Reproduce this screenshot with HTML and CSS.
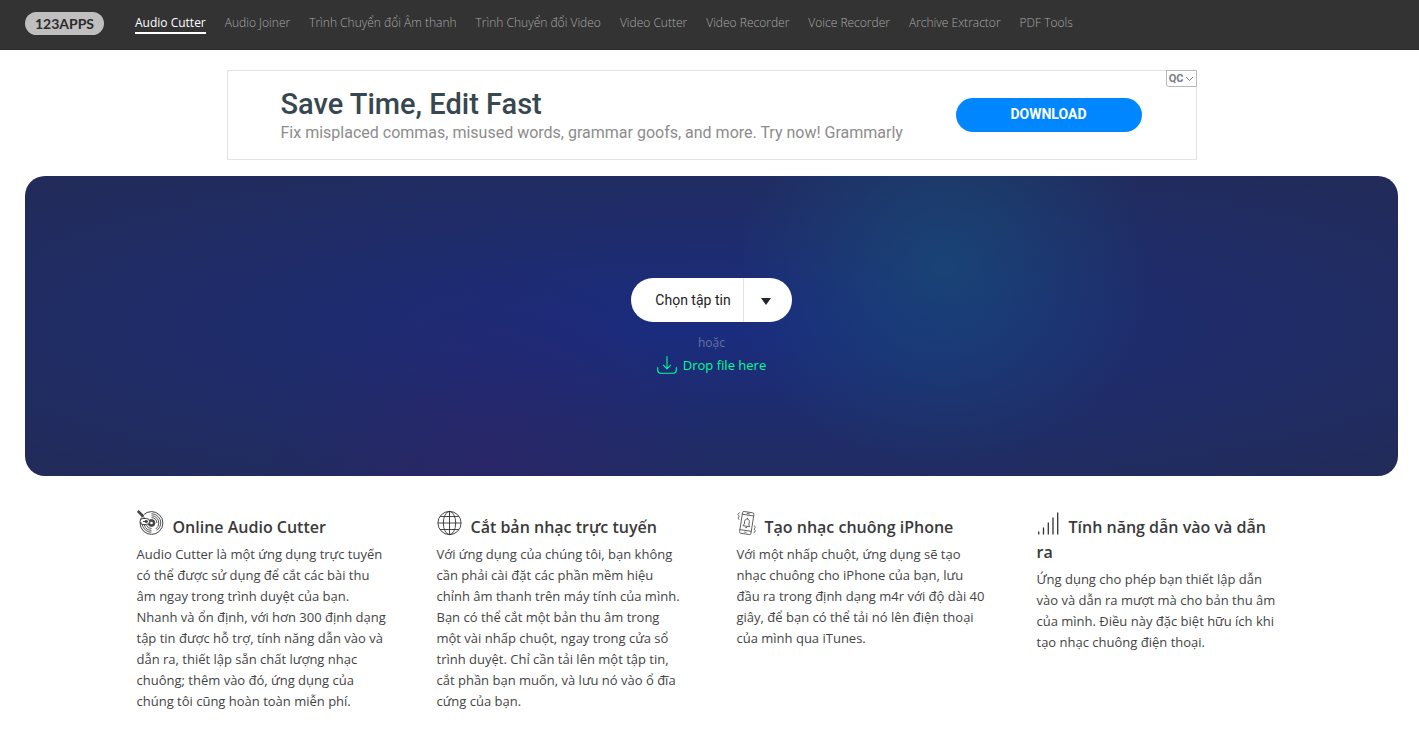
FILE: index.html
```html
<!DOCTYPE html>
<html lang="vi">
<head>
<meta charset="utf-8">
<meta name="viewport" content="width=device-width, initial-scale=1">
<title>Audio Cutter</title>
<link rel="stylesheet" href="styles.css">
</head>
<body>
<header class="topbar">
  <a class="logo" href="#">123APPS</a>
  <nav class="nav">
    <a class="nav-link active" href="#">Audio Cutter</a>
    <a class="nav-link" href="#">Audio Joiner</a>
    <a class="nav-link" href="#">Trình Chuyển đổi Âm thanh</a>
    <a class="nav-link" href="#">Trình Chuyển đổi Video</a>
    <a class="nav-link" href="#">Video Cutter</a>
    <a class="nav-link" href="#">Video Recorder</a>
    <a class="nav-link" href="#">Voice Recorder</a>
    <a class="nav-link" href="#">Archive Extractor</a>
    <a class="nav-link" href="#">PDF Tools</a>
  </nav>
</header>
<main class="page">
  <aside class="ad">
    <div class="ad-copy">
      <div class="ad-title">Save Time, Edit Fast</div>
      <div class="ad-text">Fix misplaced commas, misused words, grammar goofs, and more. Try now! Grammarly</div>
    </div>
    <a class="ad-button" href="#">DOWNLOAD</a>
    <button class="ad-badge" type="button">QC<svg width="9" height="6" viewBox="0 0 9 6" fill="none" stroke="#777d83" aria-hidden="true"><path d="M1 1 4.5 4.5 8 1"/></svg></button>
  </aside>

  <section class="drop">
    <div class="picker">
      <button class="pick-file" type="button">Chọn tập tin</button>
      <button class="pick-more" type="button" aria-label="Nguồn khác"><svg width="10" height="7" viewBox="0 0 10 7" aria-hidden="true"><path d="M0 0h10L5 7z" fill="#222533"/></svg></button>
    </div>
    <p class="or">hoặc</p>
    <p class="drop-here">
      <svg width="20" height="18" viewBox="0 0 20 18" fill="none" stroke="currentColor" stroke-width="1.1" stroke-linecap="round" stroke-linejoin="round" aria-hidden="true"><path d="M10 .6v12M6.4 9.2 10 12.8l3.6-3.6M.7 11.5v2.8q0 2.9 2.9 2.9h12.8q2.9 0 2.9-2.9v-2.8"/></svg>
      Drop file here
    </p>
  </section>

  <section class="features">
    <article class="feature">
      <h2 class="feature-title"><svg class="icon" width="27" height="26" viewBox="0 0 27 26" fill="none" stroke="#444" aria-hidden="true"><circle cx="14.5" cy="13" r="11.4"/><g transform="translate(-.5 0)"><circle cx="15" cy="13" r="3.4" fill="#444"/><circle cx="15" cy="13" r="1.3" fill="#fff" stroke="none"/><path stroke-width=".9" d="M15 3.7a9.3 9.3 0 0 1 9.3 9.3M15 5.7a7.3 7.3 0 0 1 7.3 7.3M15 7.6a5.4 5.4 0 0 1 5.4 5.4M15 22.3A9.3 9.3 0 0 1 5.7 14M15 20.3A7.3 7.3 0 0 1 7.8 15M15 18.5A5.4 5.4 0 0 1 9.8 15M24.3 13a9.3 9.3 0 0 1-4 7.5M22.3 13a7.3 7.3 0 0 1-3 6"/></g><path stroke="#fff" stroke-width="4" d="m1.5 1.7 6 6"/><path stroke-width="2.7" d="m.8 1 5.5 5.5"/><rect x="3" y="8.5" width="9.5" height="6" rx="3" fill="#fff"/><path d="m5.5 6 3 3M4 14.2v-2M6 11.5h5"/><circle cx="9.2" cy="11.5" r="1.2" fill="#444"/></svg>Online Audio Cutter</h2>
      <p class="feature-text">Audio Cutter là một ứng dụng trực tuyến có thể được sử dụng để cắt các bài thu âm ngay trong trình duyệt của bạn. Nhanh và ổn định, với hơn 300 định dạng tập tin được hỗ trợ, tính năng dẫn vào và dẫn ra, thiết lập sẵn chất lượng nhạc chuông; thêm vào đó, ứng dụng của chúng tôi cũng hoàn toàn miễn phí.</p>
    </article>
    <article class="feature">
      <h2 class="feature-title"><svg class="icon" width="25" height="26" viewBox="0 0 25 26" fill="none" stroke="#333" stroke-width=".9" aria-hidden="true"><circle cx="12.5" cy="13" r="11.6"/><ellipse cx="12.5" cy="13" rx="6.2" ry="11.6"/><path d="M12.5 1.4v23.2M.9 13h23.2M3.2 6.5h18.6M3.2 19.5h18.6"/></svg>Cắt bản nhạc trực tuyến</h2>
      <p class="feature-text">Với ứng dụng của chúng tôi, bạn không cần phải cài đặt các phần mềm hiệu chỉnh âm thanh trên máy tính của mình. Bạn có thể cắt một bản thu âm trong một vài nhấp chuột, ngay trong cửa sổ trình duyệt. Chỉ cần tải lên một tập tin, cắt phần bạn muốn, và lưu nó vào ổ đĩa cứng của bạn.</p>
    </article>
    <article class="feature">
      <h2 class="feature-title"><svg class="icon" width="19" height="26" viewBox="0 0 19 26" fill="none" stroke="#444" stroke-width=".8" aria-hidden="true"><g transform="rotate(9 9.5 13)"><rect x="4" y="2" width="11.5" height="22" rx="1.4"/><path d="M4 5h11.5M4 20.5h11.5M8.3 3.5h3M8.8 22.3h2M6.3 16.2h7l-1.2-1.6v-3.4c0-3-4.6-3-4.6 0v3.4zM9 17.5h1.8M9.8 7.7v1.2"/></g><path d="M2.5 2.5 1 4.5 2.2 6.2 1 8l1.2 1.7M17.2 15.5l1.1 1.7-1.2 1.8 1.2 1.8-1.4 2.2"/></svg>Tạo nhạc chuông iPhone</h2>
      <p class="feature-text">Với một nhấp chuột, ứng dụng sẽ tạo nhạc chuông cho iPhone của bạn, lưu đầu ra trong định dạng m4r với độ dài 40 giây, để bạn có thể tải nó lên điện thoại của mình qua iTunes.</p>
    </article>
    <article class="feature">
      <h2 class="feature-title"><svg class="icon" width="23" height="26" viewBox="0 0 23 26" fill="none" stroke="#333" stroke-width="1.3" aria-hidden="true"><path d="M1.7 21.5v3M6.5 17.5v7M11.3 12.5v12M16 7.5v17M20.7 2.5v22"/></svg>Tính năng dẫn vào và dẫn ra</h2>
      <p class="feature-text">Ứng dụng cho phép bạn thiết lập dẫn vào và dẫn ra mượt mà cho bản thu âm của mình. Điều này đặc biệt hữu ích khi tạo nhạc chuông điện thoại.</p>
    </article>
  </section>
</main>
</body>
</html>
```
FILE: styles.css
```css
* { box-sizing: border-box; }
body { margin: 0; background: #fff; color: #333; font-family: "Open Sans", sans-serif; }
a { text-decoration: none; }
button { border: 0; padding: 0; cursor: pointer; }
p, h2 { margin: 0; }

.topbar { display: flex; align-items: flex-start; gap: 31px; min-height: 50px; padding: 12px 25px 0; background: #333; border-bottom: 1px solid #2b2b2b; }
.logo { flex: none; width: 79px; border-radius: 12px; background: #bfbfbf; color: #2b2b2b; font: 700 14px/23px Lato, sans-serif; text-align: center; }
.nav { display: flex; gap: 19px; }
.nav-link { padding-top: 2px; border-bottom: 2px solid transparent; color: #a8a8a8; font-size: 12px; font-weight: 300; line-height: 18px; white-space: nowrap; }
.nav-link.active { border-bottom-color: #fff; color: #fff; font-weight: 500; }

.page { padding: 20px 21px 20px 25px; }
.ad { position: relative; display: flex; align-items: center; justify-content: space-between; max-width: 970px; min-height: 90px; margin: 0 auto 16px; padding: 0 54px 0 53px; border: 1px solid #e3e3e3; font-family: Roboto, sans-serif; }
.ad-title { color: #37474f; font-size: 29px; font-weight: 500; line-height: 34px; }
.ad-text { color: #8c8c8c; font-size: 16px; line-height: 23px; }
.ad-button { width: 186px; padding-bottom: 2px; border-radius: 17px; background: #0087ff; color: #fff; font-size: 14px; font-weight: 700; line-height: 32px; text-align: center; }
.ad-badge { position: absolute; top: -1px; right: -1px; display: flex; align-items: center; gap: 1px; height: 17px; padding: 0 2px; border: 1px solid #b5b7ba; border-radius: 0 0 0 3px; background: #fff; color: #777d83; font: 700 11px Roboto, sans-serif; }

.drop {
  display: flex; flex-direction: column; align-items: center; min-height: 300px; padding-top: 102px; border-radius: 20px;
  background:
    radial-gradient(circle 210px at 67% 30%, rgba(22, 82, 122, .6), rgba(22, 82, 122, 0)),
    radial-gradient(circle 220px at 34% 100%, rgba(52, 32, 110, .45), rgba(52, 32, 110, 0)),
    radial-gradient(ellipse at center, #1a2c80 0%, #1f2c6a 50%, #222b58 100%);
}
.picker { display: flex; height: 44px; overflow: hidden; border-radius: 22px; background: #fff; }
.pick-file { padding: 0 12px 0 24px; background: none; color: #222; font: 14px Roboto, sans-serif; }
.pick-more { width: 49px; padding: 0 4px 0 0; border-left: 1px solid #e2e2e2; background: none; }
.or { padding-top: 12px; color: #6670a4; font-size: 12px; line-height: 18px; }
.drop-here { display: flex; align-items: center; gap: 6px; padding-top: 4px; color: #00ff92; font-size: 13px; line-height: 18px; }

.features { display: grid; grid-template-columns: repeat(4, minmax(0, 1fr)); gap: 50px; max-width: 1150px; margin: 34px auto 0; }
.feature-title { margin-bottom: 4px; padding-right: 12px; color: #3a3a3a; font-size: 16px; font-weight: 600; line-height: 25px; }
.icon { margin-right: 9px; vertical-align: -3px; }
.feature-text { color: #444; font-size: 13px; line-height: 21px; }
```
